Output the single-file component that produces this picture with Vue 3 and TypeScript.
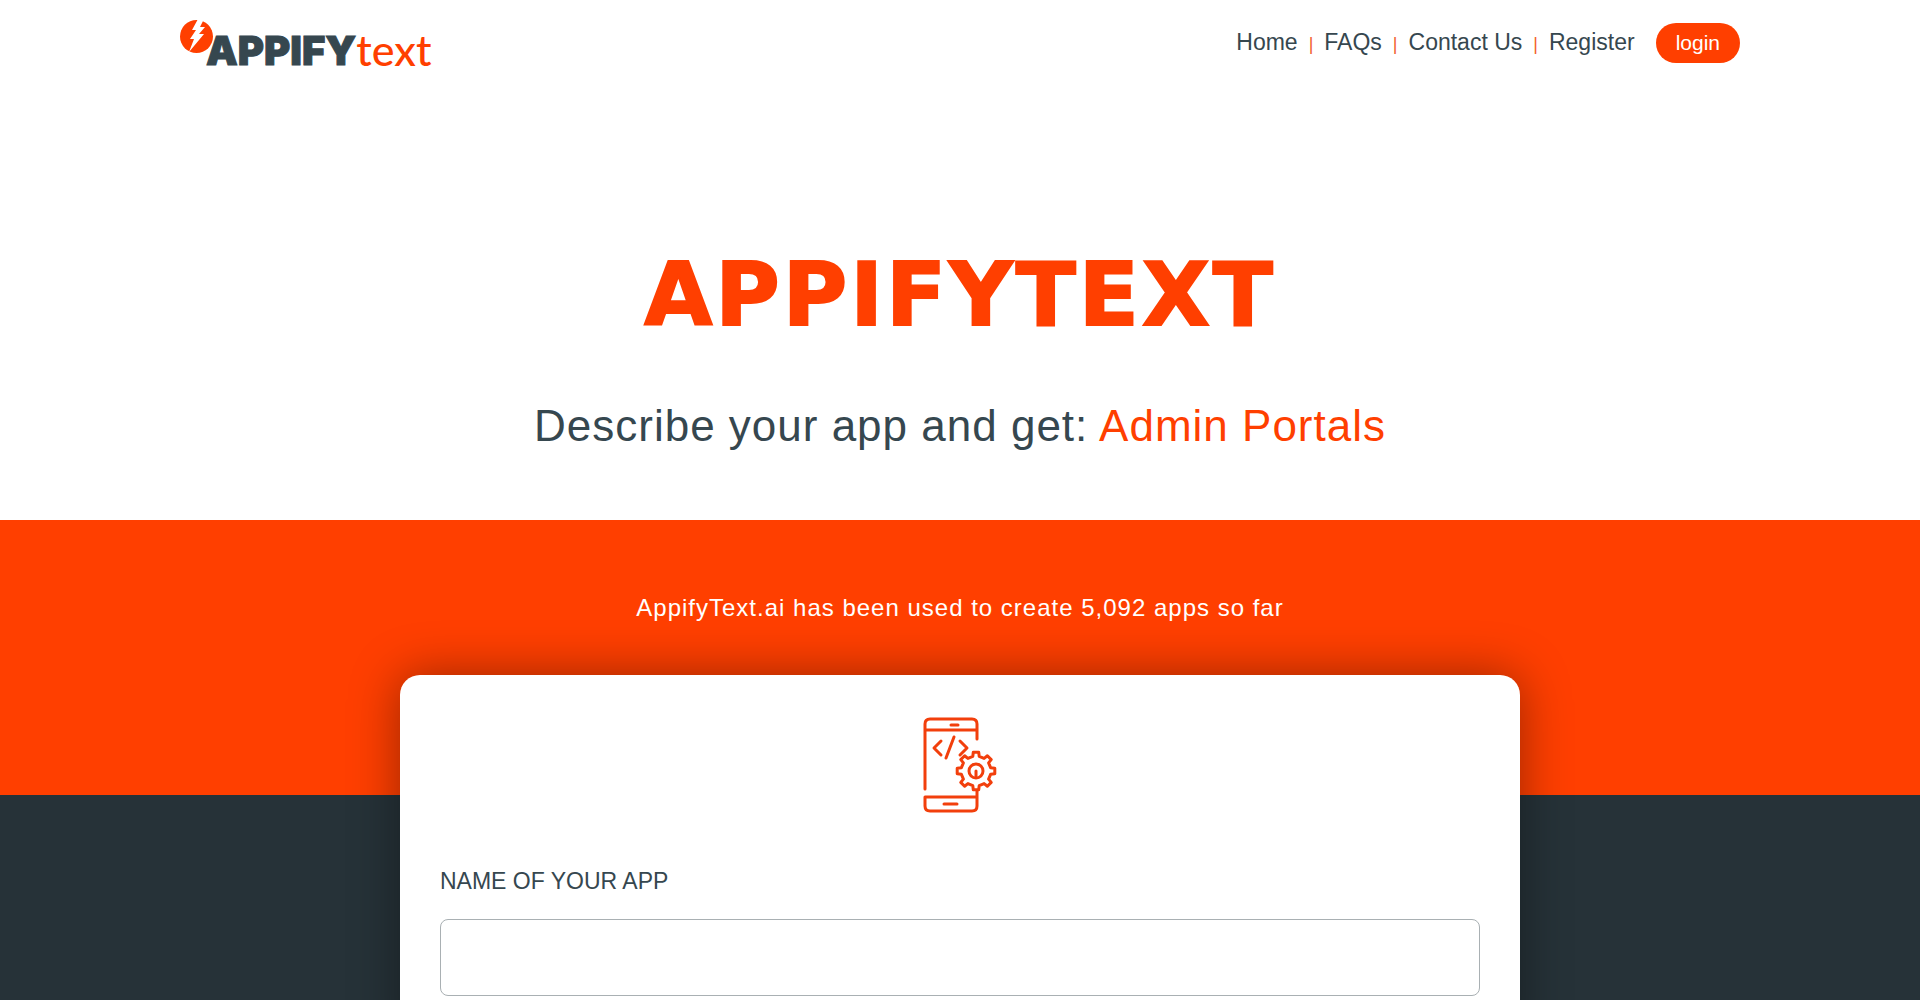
<script setup lang="ts">
interface NavLink {
  label: string
  href: string
}

const links: NavLink[] = [
  { label: 'Home', href: '#home' },
  { label: 'FAQs', href: '#faqs' },
  { label: 'Contact Us', href: '#contact' },
  { label: 'Register', href: '#register' },
]

const appCount = 5092
const feature = 'Admin Portals'

// Outline of a gear with eight teeth, centred on the given point.
function gearPath(cx: number, cy: number, outer: number, inner: number): string {
  const points: string[] = []
  const teeth = 8
  const stops: [number, number][] = [
    [-0.27, inner],
    [-0.18, outer],
    [0.18, outer],
    [0.27, inner],
  ]
  for (let i = 0; i < teeth; i++) {
    for (const [shift, radius] of stops) {
      const angle = ((i + shift) / teeth) * Math.PI * 2
      points.push(`${(cx + radius * Math.sin(angle)).toFixed(1)} ${(cy - radius * Math.cos(angle)).toFixed(1)}`)
    }
  }
  return `M${points.join('L')}Z`
}

const gear = gearPath(54, 54, 19, 15)
</script>

<template>
  <div class="page">
    <header class="topbar">
      <a class="logo" href="#home" aria-label="AppifyText">
        <svg class="logo-mark" viewBox="0 0 34 34" aria-hidden="true">
          <circle cx="16.5" cy="17.5" r="16.5" fill="#ff3f00" />
          <path d="M18 0L12 11H16L10 20H14L9 33L24 15H19L25 8H20L24 0Z" fill="#fff" />
        </svg>
        <span class="logo-bold">APPIFY</span><span class="logo-light">text</span>
      </a>
      <nav class="nav" aria-label="Main">
        <ul class="nav-list">
          <li v-for="link in links" :key="link.label" class="nav-item">
            <a class="nav-link" :href="link.href">{{ link.label }}</a>
          </li>
        </ul>
        <button class="login" type="button">login</button>
      </nav>
    </header>

    <main>
      <section class="hero">
        <h1 class="title">APPIFYTEXT</h1>
        <p class="tagline">Describe your app and get: <span class="accent">{{ feature }}</span></p>
      </section>

      <section class="band">
        <p class="counter">AppifyText.ai has been used to create {{ appCount.toLocaleString('en-US') }} apps so far</p>
      </section>

      <section class="builder">
        <form class="card" @submit.prevent>
          <svg class="card-icon" viewBox="0 0 76 96" aria-hidden="true">
            <g fill="none" stroke="#f23f0c" stroke-width="3" stroke-linecap="round" stroke-linejoin="round">
              <path d="M3 72V7Q3 2 8 2H50Q55 2 55 7V22M3 13H55M29 8H36" />
              <path d="M3 80H55V89Q55 94 50 94H8Q3 94 3 89ZM55 80V74M22 87H35" />
              <path d="M19 24L12 31L19 38M32 20L24 41M38 24L45 31L38 38" />
              <path :d="gear" fill="#fff" />
              <circle cx="54" cy="54" r="7" />
              <path d="M54 54V59" />
            </g>
          </svg>
          <label class="field-label" for="app-name">NAME OF YOUR APP</label>
          <input id="app-name" class="field" type="text" name="app-name" />
        </form>
      </section>
    </main>
  </div>
</template>

<style>
body {
  margin: 0;
}
</style>

<style scoped>
.page {
  font-family: "Liberation Sans", Arial, sans-serif;
  color: #36474f;
  background: #fff;
}

.topbar {
  display: flex;
  align-items: flex-start;
  justify-content: space-between;
  padding: 19px 180px 0;
  height: 66px;
}

.logo {
  display: flex;
  align-items: flex-start;
  color: #36474f;
  text-decoration: none;
  line-height: 48px;
}

.logo-mark {
  width: 34px;
  height: 34px;
  margin-right: -8px;
}

.logo-bold {
  font-family: Inter, sans-serif;
  font-size: 40px;
  font-weight: 900;
  padding-top: 8px;
  -webkit-text-stroke: 1px currentColor;
}

.logo-light {
  font-family: Lato, sans-serif;
  font-size: 43px;
  font-weight: 500;
  color: #ff3f00;
  padding-top: 7px;
}

.nav {
  display: flex;
  align-items: flex-start;
  gap: 21px;
  padding-top: 4px;
}

.nav-list {
  display: flex;
  margin: 0;
  padding: 0;
  list-style: none;
}

.nav-item {
  display: flex;
  align-items: baseline;
}

.nav-item + .nav-item::before {
  content: "|";
  padding: 0 11px;
  font-size: 18px;
  color: #f2602c;
}

.nav-link {
  font-size: 23px;
  line-height: 38px;
  color: #36474f;
  text-decoration: none;
}

.login {
  height: 40px;
  padding: 0 20px;
  border: 0;
  border-radius: 20px;
  background: #ff3f00;
  color: #fff;
  font-family: inherit;
  font-size: 21px;
  line-height: 40px;
}

.hero {
  display: flex;
  flex-direction: column;
  align-items: center;
  padding: 156px 20px 68px;
  text-align: center;
}

.title {
  margin: 0;
  font-family: "Arial Black", "DejaVu Sans", sans-serif;
  font-size: 88px;
  font-weight: 900;
  font-kerning: none;
  line-height: 108px;
  letter-spacing: 3px;
  color: #ff3f00;
  -webkit-text-stroke: 2px currentColor;
}

.tagline {
  margin: 51px 0 0;
  font-size: 44px;
  line-height: 52px;
  letter-spacing: 1px;
}

.accent {
  color: #ff3f00;
}

.band {
  height: 275px;
  background: #ff3f00;
}

.counter {
  margin: 0;
  padding-top: 72px;
  color: #fff;
  font-size: 24px;
  line-height: 32px;
  letter-spacing: 1px;
  text-align: center;
}

.builder {
  display: flex;
  justify-content: center;
  padding: 0 20px 60px;
  background: #263238;
}

.card {
  display: flex;
  flex-direction: column;
  box-sizing: border-box;
  width: 100%;
  max-width: 1120px;
  margin-top: -120px;
  padding: 42px 40px 60px;
  border-radius: 20px;
  background: #fff;
  box-shadow: 0 0 50px rgba(0, 0, 0, 0.4);
}

.card-icon {
  width: 76px;
  height: 96px;
  align-self: center;
}

.field-label {
  margin: 52px 0 22px;
  font-size: 23px;
  line-height: 32px;
}

.field {
  box-sizing: border-box;
  width: 100%;
  height: 77px;
  padding: 0 20px;
  border: 1px solid #a9b0b3;
  border-radius: 8px;
  font: inherit;
  font-size: 24px;
}
</style>
